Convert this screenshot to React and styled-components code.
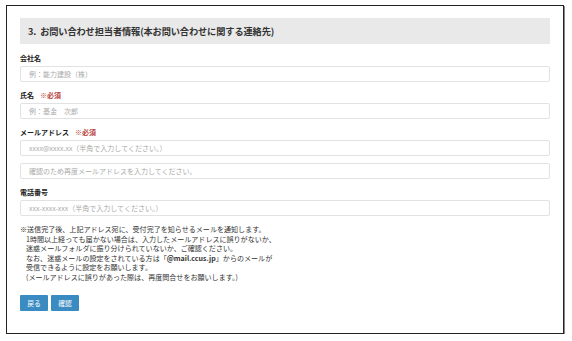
import styled, { createGlobalStyle } from 'styled-components';

const GlobalStyle = createGlobalStyle`
  body {
    margin: 0;
    background: #fff;
    font-family: "Noto Sans CJK JP", "Noto Sans", sans-serif;
    color: #333;
  }
`;

const Frame = styled.div`
  box-sizing: border-box;
  width: 558px;
  height: 329px;
  margin: 5px 0 0 6px;
  border: 1px solid #222;
  box-shadow: 1px 1px 0 #888;
  padding: 12px 13px 0 13px;
`;

const Heading = styled.h2`
  margin: 0;
  height: 26px;
  background: #e9e9e9;
  display: flex;
  align-items: center;
  padding-left: 8px;
  font-size: 9.2px;
  font-weight: 700;
  color: #333;
  letter-spacing: -0.1px;
`;

const Form = styled.form`
  display: flex;
  flex-direction: column;
  padding-top: 10px;
`;

const Field = styled.div`
  display: flex;
  flex-direction: column;
  gap: 4px;
  margin-bottom: 9px;
`;

const InputStack = styled.div`
  display: flex;
  flex-direction: column;
  gap: 7px;
`;

const Label = styled.label`
  font-size: 7px;
  line-height: 8px;
  font-weight: 700;
  color: #222;
  display: flex;
  gap: 6px;
`;

const Required = styled.span`
  color: #b9413a;
`;

const Input = styled.input`
  box-sizing: border-box;
  width: 100%;
  height: 16px;
  border: 1px solid #e2e2e2;
  border-radius: 2px;
  padding: 0 8px;
  font-family: inherit;
  font-size: 7px;
  color: #333;
  outline: none;

  &::placeholder {
    color: #aaa;
  }
`;

const Notice = styled.div`
  font-size: 7.05px;
  line-height: 9.5px;
  color: #333;

  & b {
    font-weight: 700;
  }
`;

const Line = styled.p`
  margin: 0;
  padding-left: ${(props) => (props.$indent ? '6px' : '0')};
`;

const Buttons = styled.div`
  display: flex;
  gap: 3px;
  margin-top: 13px;
`;

const Button = styled.button`
  box-sizing: border-box;
  width: 28px;
  height: 16px;
  border: none;
  border-radius: 1px;
  background: #3a8bc2;
  color: #fff;
  font-family: inherit;
  font-size: 6.8px;
  padding: 0;
  display: flex;
  align-items: center;
  justify-content: center;
`;

function App() {
  return (
    <>
      <GlobalStyle />
      <Frame>
        <Heading>3.&nbsp;&nbsp;お問い合わせ担当者情報(本お問い合わせに関する連絡先)</Heading>
        <Form>
          <Field>
            <Label>会社名</Label>
            <Input placeholder="例：能力建設（株）" />
          </Field>
          <Field>
            <Label>
              氏名 <Required>※必須</Required>
            </Label>
            <Input placeholder="例：基金　次郎" />
          </Field>
          <Field>
            <Label>
              メールアドレス <Required>※必須</Required>
            </Label>
            <InputStack>
              <Input placeholder="xxxx@xxxx.xx（半角で入力してください。）" />
              <Input placeholder="確認のため再度メールアドレスを入力してください。" />
            </InputStack>
          </Field>
          <Field>
            <Label>電話番号</Label>
            <Input placeholder="xxx-xxxx-xxx（半角で入力してください。）" />
          </Field>
          <Notice>
            <Line>※送信完了後、上記アドレス宛に、受付完了を知らせるメールを通知します。</Line>
            <Line $indent>1時間以上経っても届かない場合は、入力したメールアドレスに誤りがないか、</Line>
            <Line $indent>迷惑メールフォルダに振り分けられていないか、ご確認ください。</Line>
            <Line $indent>
              なお、迷惑メールの設定をされている方は「<b>@mail.ccus.jp</b>」からのメールが
            </Line>
            <Line $indent>受信できるように設定をお願いします。</Line>
            <Line $indent>(メールアドレスに誤りがあった際は、再度問合せをお願いします。)</Line>
          </Notice>
          <Buttons>
            <Button type="button">戻る</Button>
            <Button type="button">確認</Button>
          </Buttons>
        </Form>
      </Frame>
    </>
  );
}

export default App;
